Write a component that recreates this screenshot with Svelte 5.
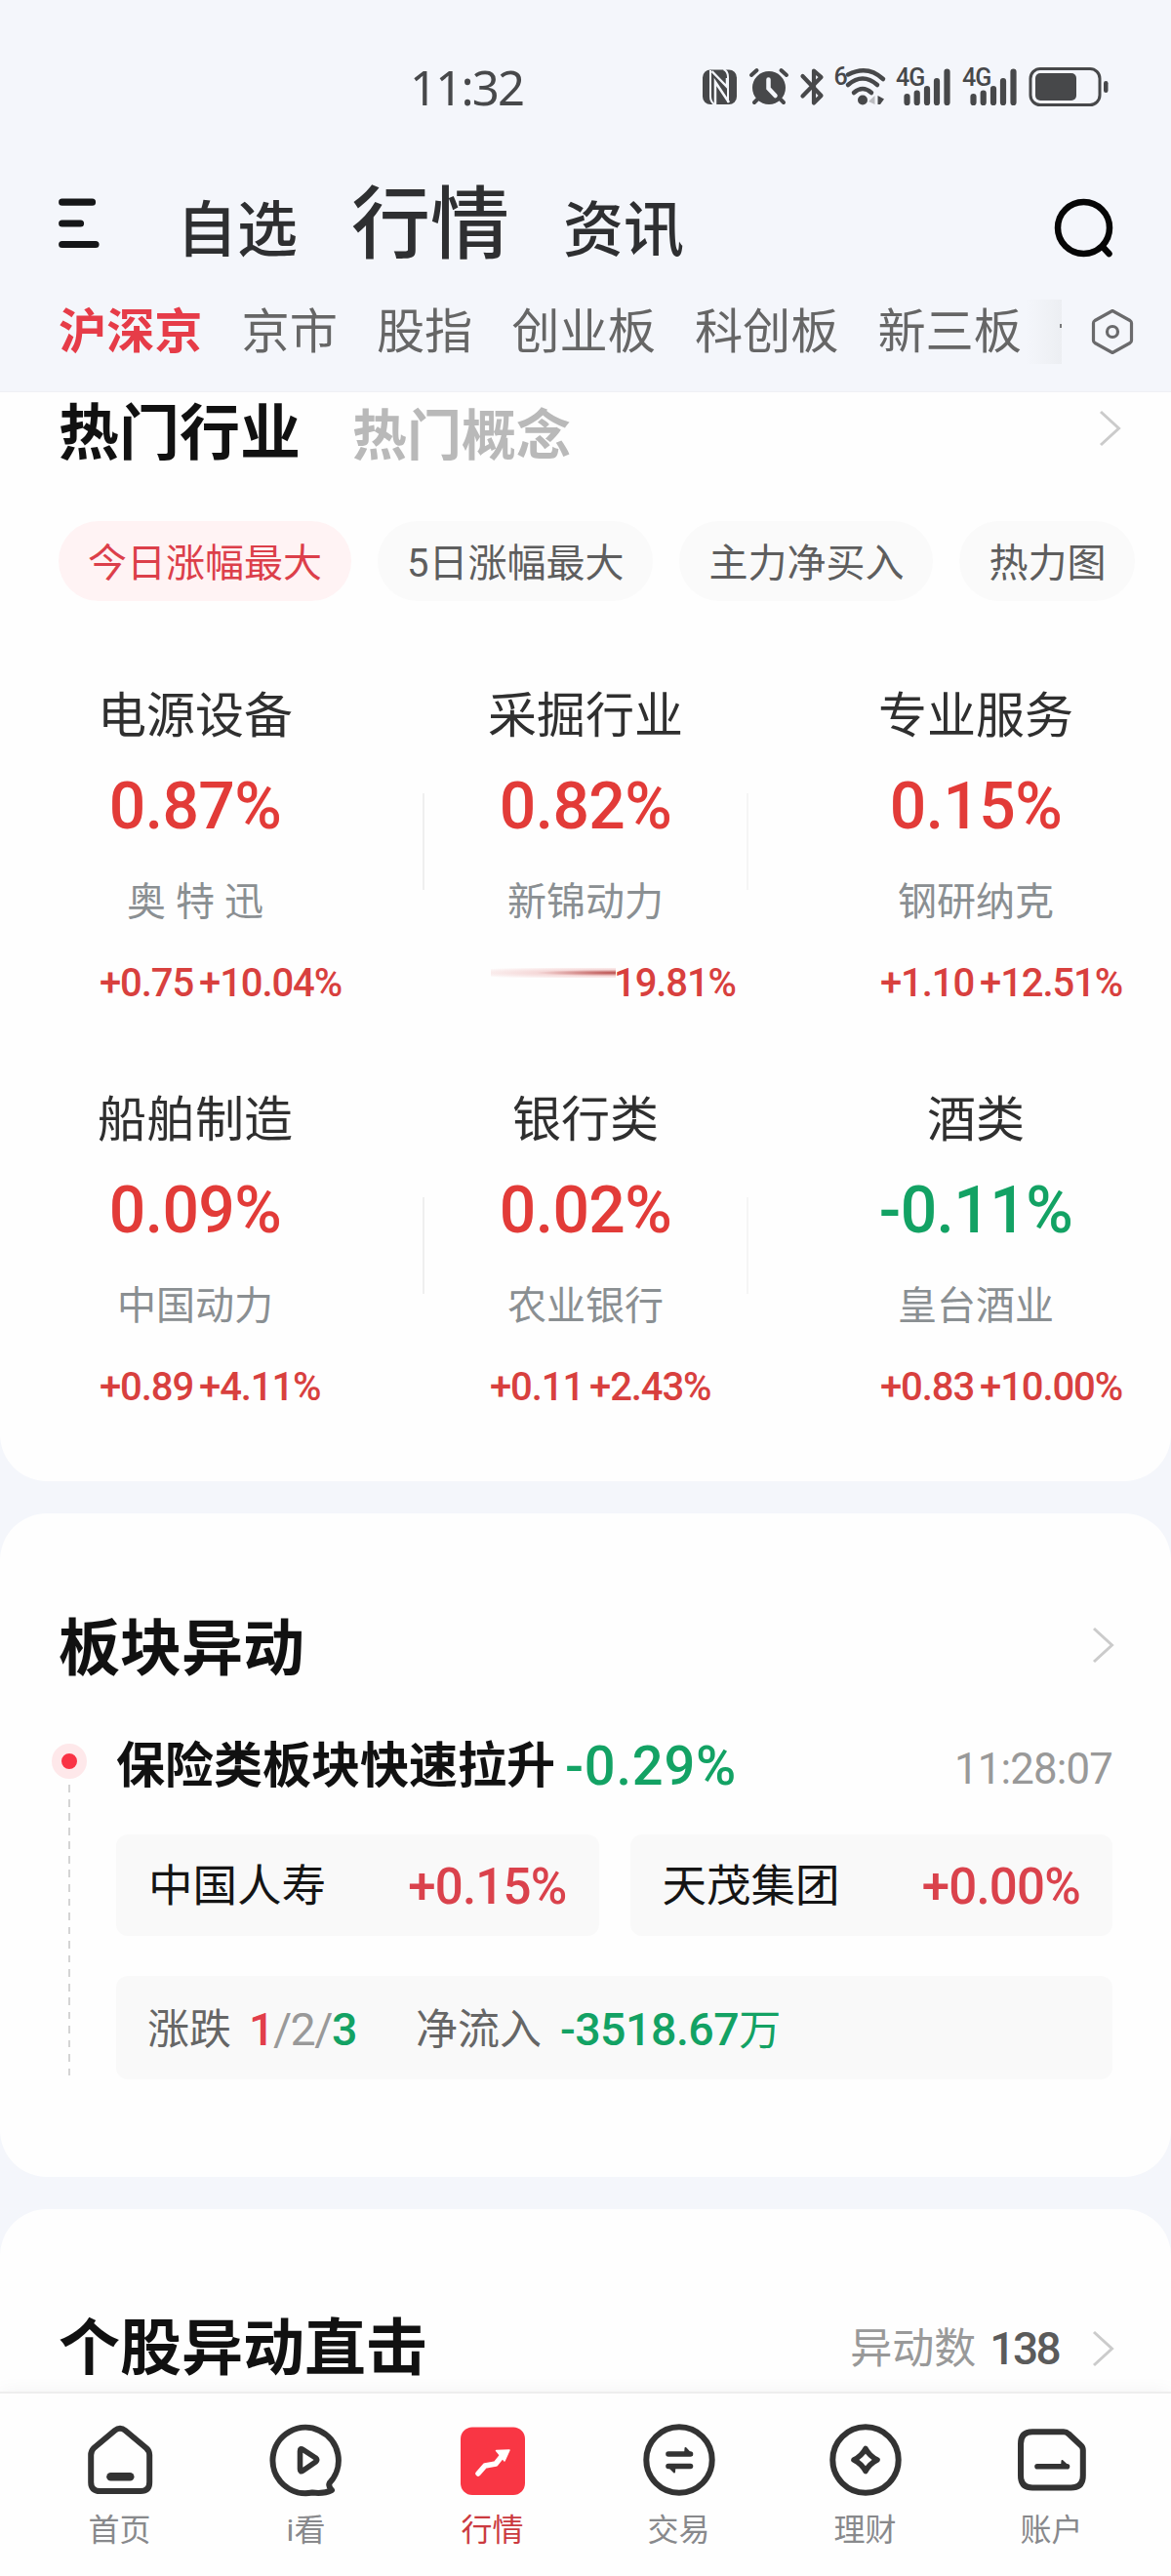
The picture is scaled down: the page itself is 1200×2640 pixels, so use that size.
<script>
  const navs = ['自选', '行情', '资讯'];
  const markets = ['沪深京', '京市', '股指', '创业板', '科创板', '新三板'];
  const filters = ['今日涨幅最大', '5日涨幅最大', '主力净买入', '热力图'];

  let activeNav = '行情';
  let activeMarket = '沪深京';
  let activeFilter = '今日涨幅最大';
  let activeTab = 'market';

  const industries = [
    [
      { name: '电源设备', pct: '0.87%', stock: '奥 特 迅', change: '+0.75', rate: '+10.04%' },
      { name: '采掘行业', pct: '0.82%', stock: '新锦动力', change: '', rate: '19.81%' },
      { name: '专业服务', pct: '0.15%', stock: '钢研纳克', change: '+1.10', rate: '+12.51%' },
    ],
    [
      { name: '船舶制造', pct: '0.09%', stock: '中国动力', change: '+0.89', rate: '+4.11%' },
      { name: '银行类', pct: '0.02%', stock: '农业银行', change: '+0.11', rate: '+2.43%' },
      { name: '酒类', pct: '-0.11%', stock: '皇台酒业', change: '+0.83', rate: '+10.00%' },
    ],
  ];

  const stocks = [
    { name: '中国人寿', rate: '+0.15%' },
    { name: '天茂集团', rate: '+0.00%' },
  ];

  const tabs = [
    { id: 'home', label: '首页' },
    { id: 'look', label: 'i看' },
    { id: 'market', label: '行情' },
    { id: 'trade', label: '交易' },
    { id: 'wealth', label: '理财' },
    { id: 'account', label: '账户' },
  ];
</script>

{#snippet chevron()}
  <svg class="chevron" width="24" height="40" viewBox="0 0 24 40">
    <path d="M2 3 L20.500 20 L2 37" fill="none" stroke="#cbcbcb" stroke-width="3" />
  </svg>
{/snippet}

<div class="page">
  <div class="status-bar">
    <span class="clock">11:32</span>
    <svg class="status-icons" width="420" height="68" viewBox="716 54 420 68">
      <!-- nfc -->
      <rect x="719" y="70.500" width="35" height="35.500" rx="8" fill="#47484a" />
      <path d="M727 71 V98 Q727 103 731 106" fill="none" stroke="#f4f6fb" stroke-width="2" />
      <path d="M728.500 72 L744 88 V79" fill="none" stroke="#f4f6fb" stroke-width="2.500" />
      <path d="M732 106 V83 L746 104" fill="none" stroke="#f4f6fb" stroke-width="2.500" />
      <path d="M740.500 70 Q745 72 745 78 V104" fill="none" stroke="#f4f6fb" stroke-width="2" />
      <!-- alarm -->
      <circle cx="787" cy="89" r="17" fill="#47484a" />
      <path d="M769 76 L774.500 71 M805 76 L799.500 71 M772 104 L777 99 M802 104 L797 99" stroke="#47484a" stroke-width="4" stroke-linecap="round" />
      <path d="M786.500 80.500 V89.500 L793.500 97" fill="none" stroke="#f4f6fb" stroke-width="4.500" stroke-linecap="round" />
      <!-- bluetooth -->
      <path d="M821.500 77 L840.500 97 L833 104.500 V71.500 L840.500 78 L821.500 97.500" fill="none" stroke="#47484a" stroke-width="4.200" stroke-linejoin="round" stroke-linecap="round" />
      <!-- wifi -->
      <text x="853.500" y="86" class="net-label">6</text>
      <path d="M868 75.500 Q888 65 904 80" fill="none" stroke="#47484a" stroke-width="4.500" stroke-linecap="round" />
      <path d="M868 86 Q883 73 898 86" fill="none" stroke="#47484a" stroke-width="4.500" stroke-linecap="round" />
      <path d="M874 94 Q883 86 892 94" fill="none" stroke="#47484a" stroke-width="4.500" stroke-linecap="round" />
      <circle cx="883" cy="101.500" r="5" fill="#47484a" />
      <path d="M889 103 L895.500 97 V106 Z" fill="#bcbdc1" />
      <path d="M898.500 97 L905 100.500 L901 106 H898.500 Z" fill="#47484a" />
      <!-- signal -->
      {#each [0, 68] as dx}
        <g transform="translate({dx} 0)">
          <text x="917" y="87" class="net-label">4G</text>
          <path d="M928.500 98 V104 M938.700 94.500 V104 M949 90 V104 M959 82 V104 M969.500 72.500 V104" stroke="#47484a" stroke-width="6.200" stroke-linecap="round" />
        </g>
      {/each}
      <!-- battery -->
      <rect x="1055" y="69.500" width="71" height="37" rx="10" fill="none" stroke="#47484a" stroke-width="3" />
      <rect x="1060" y="74" width="42" height="28" rx="5" fill="#47484a" />
      <rect x="1130" y="82" width="4.500" height="12" rx="2.200" fill="#47484a" />
    </svg>
  </div>

  <header class="nav">
    <svg class="menu" width="42" height="52" viewBox="0 0 42 52">
      <path d="M3.700 4.200 H34.500 M3.700 26 H22.500 M3.700 47.500 H38" stroke="#151618" stroke-width="7.200" stroke-linecap="round" />
    </svg>
    <div class="nav-items">
      {#each navs as item}
        <span class="nav-item" class:active={item === activeNav}>{item}</span>
      {/each}
    </div>
    <svg class="search" width="66" height="66" viewBox="0 0 66 66">
      <circle cx="32.500" cy="32.500" r="26.500" fill="none" stroke="#060606" stroke-width="6.500" />
      <path d="M52 52 L58.500 59" stroke="#060606" stroke-width="6.500" stroke-linecap="round" />
    </svg>
  </header>

  <div class="markets">
    {#each markets as item}
      <span class="market" class:active={item === activeMarket}>{item}</span>
    {/each}
    <span class="fade"><i></i></span>
    <svg class="hex" width="44" height="48" viewBox="0 0 44 48">
      <path d="M22 2.500 L40 12.500 Q41.500 13.500 41.500 15 V33 Q41.500 34.500 40 35.500 L22 45.500 L4 35.500 Q2.500 34.500 2.500 33 V15 Q2.500 13.500 4 12.500 Z" fill="none" stroke="#6a6a6c" stroke-width="3.200" stroke-linejoin="round" />
      <circle cx="22" cy="24" r="5.500" fill="none" stroke="#6a6a6c" stroke-width="3.200" />
    </svg>
  </div>

  <main>
    <section class="card hot">
      <div class="hot-head">
        <h2>热门行业</h2>
        <h2 class="muted">热门概念</h2>
        {@render chevron()}
      </div>
      <div class="filters">
        {#each filters as item}
          <span class="filter" class:active={item === activeFilter}>{item}</span>
        {/each}
      </div>
      {#each industries as row}
        <div class="industry-row">
          {#each row as item, i}
            {#if i === 1}<span class="divider"></span>{/if}
            <div class="industry">
              <div class="name">{item.name}</div>
              <div class="pct" class:down={item.pct.startsWith('-')}>{item.pct}</div>
              <div class="stock">{item.stock}</div>
              <div class="change">
                {#if item.change}
                  <span>{item.change}</span>
                {:else}
                  <span class="streak"></span>
                {/if}
                <span>{item.rate}</span>
              </div>
            </div>
            {#if i === 1}<span class="divider light"></span>{/if}
          {/each}
        </div>
      {/each}
    </section>

    <section class="card moves">
      <div class="card-head">
        <h2>板块异动</h2>
        {@render chevron()}
      </div>
      <div class="timeline">
        <div class="rail">
          <span class="dot"></span>
          <span class="dash"></span>
        </div>
        <div class="event">
          <div class="event-head">
            <strong>保险类板块快速拉升</strong>
            <span class="event-pct">-0.29%</span>
            <span class="event-time">11:28:07</span>
          </div>
          <div class="stocks">
            {#each stocks as s}
              <div class="box">
                <span class="box-name">{s.name}</span>
                <span class="box-rate">{s.rate}</span>
              </div>
            {/each}
          </div>
          <div class="box summary">
            <span>涨跌</span>
            <span class="counts"><b class="up">1</b>/2/<b class="down">3</b></span>
            <span>净流入</span>
            <span class="flow down">-3518.67<em>万</em></span>
          </div>
        </div>
      </div>
    </section>

    <section class="card strike">
      <div class="card-head">
        <h2>个股异动直击</h2>
        <span class="count-label">异动数</span>
        <span class="count">138</span>
        {@render chevron()}
      </div>
    </section>
  </main>

  <nav class="tab-bar">
    {#each tabs as tab}
      <div class="tab" class:active={tab.id === activeTab}>
        <svg width="76" height="76" viewBox="0 0 76 76" fill="none" stroke="#333" stroke-width="6" stroke-linejoin="round" stroke-linecap="round">
          {#if tab.id === 'home'}
            <path d="M8.200 33 Q8.200 29 11 26 L32.500 8 Q38 3.500 43.500 8 L65 26 Q68.200 29 68.200 33 V61 Q68.200 70 59 70 H17.500 Q8.200 70 8.200 61 Z" />
            <path d="M28.500 55.300 H48.200" stroke-width="8.600" />
          {:else if tab.id === 'look'}
            <path d="M61.800 61.500 A33.700 33.700 0 1 0 44 71.500 Q56 73 64 69 Q60 65 61.800 61.500 Z" />
            <path d="M31.500 29 Q31.500 25.500 34.500 27.500 L47.500 36 Q50 38 47.500 40 L34.500 49 Q31.500 51 31.500 47.500 Z" stroke-width="5.600" />
          {:else if tab.id === 'market'}
            <rect x="5" y="4.500" width="66" height="69.500" rx="12" fill="#f93644" stroke="none" />
            <path d="M23 52 L30 44 L41 42 L49 32" stroke="#fff" stroke-width="5.500" />
            <path d="M41.500 28.500 L55 28 L50 39 Z" fill="#fff" stroke="#fff" stroke-width="1.500" />
          {:else if tab.id === 'trade'}
            <circle cx="38" cy="38" r="33.700" />
            <path d="M27 32 H49.500 M27 44.500 H49.500" stroke-width="5.600" />
            <path d="M44.500 26 L51 33 H44 Z M33 50.500 L26 43.500 H33.500 Z" fill="#333" stroke-width="2" />
          {:else if tab.id === 'wealth'}
            <circle cx="38" cy="38" r="33.700" />
            <path d="M38 26.500 Q42 34 50 38 Q42 42 38 49.500 Q34 42 26 38 Q34 34 38 26.500 Z" stroke-width="5.600" />
          {:else}
            <path d="M18 9.300 H50 Q53 9.300 55 11.300 L67.500 23 Q69.800 25 69.800 28 V54 Q69.800 66.500 57.500 66.500 H18 Q6 66.500 6 54 V21.500 Q6 9.300 18 9.300 Z" />
            <path d="M23 44.700 H53.500" stroke-width="5.600" />
            <path d="M48.500 39 L55 45 H48 Z" fill="#333" stroke-width="2" />
          {/if}
        </svg>
        <span>{tab.label}</span>
      </div>
    {/each}
  </nav>
</div>

<style>
  :global(body) {
    margin: 0;
    background: #f4f6fb;
  }

  .page {
    display: flex;
    flex-direction: column;
    width: 1200px;
    height: 2640px;
    overflow: hidden;
    background: #f4f6fb;
    font-family: Roboto, "Noto Sans CJK SC", sans-serif;
    color: #2e2f31;
  }

  svg {
    display: block;
    flex: none;
  }

  h2 {
    margin: 0;
    font-size: 63px;
    line-height: 76px;
    font-weight: 700;
    color: #111;
  }

  .status-bar {
    display: flex;
    align-items: center;
    justify-content: space-between;
    height: 177px;
    padding: 0 63px 0 420px;
  }

  .clock {
    font-family: "Noto Sans", sans-serif;
    font-size: 49px;
    line-height: 60px;
    letter-spacing: -1.8px;
    color: #47484a;
  }

  .net-label {
    font: 500 25px Roboto, sans-serif;
    letter-spacing: -1px;
    fill: #47484a;
  }

  .nav {
    display: flex;
    height: 113px;
    padding: 0 56px 0 60px;
  }

  .menu { margin-top: 26px; }

  .nav-items {
    display: flex;
    align-items: baseline;
    gap: 55px;
    margin: 4px auto 0 79px;
  }

  .nav-item {
    font-size: 62px;
    line-height: 76px;
    font-weight: 500;
  }

  .nav-item.active {
    font-size: 81px;
    line-height: 100px;
  }

  .search { margin-top: 24px; }

  .markets {
    display: flex;
    align-items: center;
    height: 112px;
    padding: 0 38px 11px 60px;
    box-sizing: border-box;
    font-size: 49.2px;
    line-height: 60px;
    color: #666;
    border-bottom: 1px solid #eff0f4;
  }

  .market {
    margin-right: 40px;
    white-space: nowrap;
  }

  .market.active {
    font-weight: 700;
    color: #e63c48;
  }

  .fade {
    display: flex;
    justify-content: flex-end;
    width: 37px;
    height: 66px;
    margin-left: -36px;
    margin-right: auto;
    background: linear-gradient(to right, #f4f6fb, #eceef2);
  }

  .fade i {
    width: 2px;
    height: 4px;
    margin-top: 25px;
    background: #77787a;
  }

  main {
    flex: 1;
    min-height: 0;
    display: flex;
    flex-direction: column;
    gap: 33px;
    overflow: hidden;
  }

  .card {
    flex: none;
    box-sizing: border-box;
    border-radius: 48px;
    background: #fefefe;
  }

  .hot {
    height: 1116px;
    padding-top: 6px;
    border-radius: 0 0 48px 48px;
  }

  .hot-head {
    display: flex;
    align-items: baseline;
    height: 80px;
    padding: 0 50px 0 60px;
  }

  .hot-head h2 {
    font-size: 62px;
    line-height: 74px;
  }

  .hot-head h2.muted {
    margin-left: 53px;
    font-size: 56px;
    color: #b9b9b9;
  }

  .hot-head .chevron {
    align-self: flex-start;
    margin-top: 11px;
  }

  .chevron { margin-left: auto; }

  .filters {
    display: flex;
    gap: 27px;
    margin: 46px 0 88px 60px;
  }

  .filter {
    padding: 0 30px;
    border-radius: 41px;
    background: #fafafa;
    font-size: 40px;
    line-height: 87px;
    height: 82px;
    white-space: nowrap;
    color: #5e5e5e;
  }

  .filter.active {
    background: #fff3f4;
    color: #dc3f4a;
  }

  .industry-row {
    display: flex;
    height: 326px;
    padding: 0 100px;
    margin-bottom: 88px;
  }

  .industry {
    flex: none;
    width: 200px;
    text-align: center;
    white-space: nowrap;
  }

  .divider {
    width: 2px;
    height: 99px;
    margin: 109px 65px 0 133px;
    background: #efefef;
  }

  .divider.light {
    margin: 109px 133px 0 65px;
    background: #f5f5f5;
  }

  .name {
    font-size: 50px;
    line-height: 60px;
    color: #2f2f2f;
  }

  .pct {
    margin-top: 28px;
    font-size: 66px;
    line-height: 70px;
    font-weight: 500;
    letter-spacing: -0.6px;
    color: #e23b38;
  }

  .stock {
    margin-top: 39px;
    font-size: 40px;
    line-height: 48px;
    color: #8a8f92;
  }

  .change {
    display: flex;
    gap: 6px;
    margin-top: 37px;
    padding-left: 2px;
    font-size: 40px;
    line-height: 44px;
    font-weight: 500;
    letter-spacing: -1.1px;
    color: #d8403e;
  }

  .streak {
    flex: none;
    width: 128px;
    height: 10px;
    margin: 6px -8px 0 1px;
    background: radial-gradient(ellipse at 100% 50%, #b84a48, rgba(225, 130, 130, 0.3) 45%, transparent 95%);
  }

  .pct.down, .down { color: #13a264; }
  .up { color: #e23e4b; }

  .card-head {
    display: flex;
    align-items: center;
    padding: 0 57px 0 60px;
  }

  .moves {
    height: 680px;
    padding-top: 101px;
  }

  .moves .chevron { margin-top: -9px; }

  .timeline {
    display: flex;
    gap: 30px;
    margin: 52px 60px 0 53px;
  }

  .rail {
    display: flex;
    flex-direction: column;
    align-items: center;
    width: 36px;
    height: 345px;
    margin-top: 7px;
  }

  .dot {
    flex: none;
    width: 16px;
    height: 16px;
    border: 10px solid #fee8ea;
    border-radius: 50%;
    background: #f93345;
  }

  .dash {
    flex: 1;
    width: 2px;
    background: repeating-linear-gradient(to bottom, transparent 0 6.5px, #d4d4d4 6.5px 14.5px);
  }

  .event { flex: 1; }

  .event-head {
    display: flex;
    align-items: center;
    height: 60px;
    line-height: 60px;
  }

  .event-head strong {
    font-size: 50px;
    color: #111;
  }

  .event-pct {
    margin-left: 10px;
    font-size: 56px;
    font-weight: 500;
    letter-spacing: 0.8px;
    color: #13a264;
  }

  .event-time {
    margin-left: auto;
    padding-top: 6px;
    font-size: 43.7px;
    letter-spacing: -0.8px;
    color: #999;
  }

  .stocks {
    display: grid;
    grid-template-columns: 1fr 1fr;
    gap: 32px;
    margin: 40px 0 41px;
  }

  .box {
    display: flex;
    align-items: center;
    justify-content: space-between;
    box-sizing: border-box;
    height: 104px;
    padding: 4px 33px 0;
    border-radius: 12px;
    background: #f9f9f9;
    line-height: 60px;
  }

  .box-name {
    font-size: 45.5px;
    color: #151515;
  }

  .box-rate {
    font-size: 51px;
    font-weight: 500;
    letter-spacing: -0.8px;
    color: #da424c;
  }

  .summary {
    justify-content: flex-start;
    height: 106px;
    padding: 3px 32px 0;
    font-size: 43px;
    color: #666;
  }

  .counts {
    margin: 1px 61px 0 18px;
    font-size: 46.5px;
    letter-spacing: -1.5px;
    color: #999;
  }

  .counts b { font-weight: 500; }

  .flow {
    margin: 1px 0 0 19px;
    font-size: 46.5px;
    font-weight: 500;
    letter-spacing: -0.5px;
  }

  .flow em {
    font-style: normal;
    font-weight: 400;
    font-size: 43px;
  }

  .strike {
    height: 400px;
    padding-top: 105px;
  }

  .count-label {
    margin-left: auto;
    font-size: 43px;
    line-height: 60px;
    color: #999;
  }

  .count {
    margin: 0 34px 0 14px;
    font-size: 46px;
    line-height: 60px;
    font-weight: 500;
    letter-spacing: -2.6px;
    color: #5b5b5b;
  }

  .strike .chevron { margin-left: 0; }

  .tab-bar {
    position: relative;
    display: flex;
    box-sizing: border-box;
    height: 189px;
    padding: 30px 27px 0;
    border-top: 2px solid #eee;
    background: #fefefe;
    box-shadow: 0 0 18px rgba(0, 0, 0, 0.05);
  }

  .tab {
    flex: 1;
    display: flex;
    flex-direction: column;
    align-items: center;
    gap: 14px;
    font-size: 32px;
    line-height: 40px;
    color: #88898c;
  }

  .tab.active { color: #cb3a3f; }
</style>
